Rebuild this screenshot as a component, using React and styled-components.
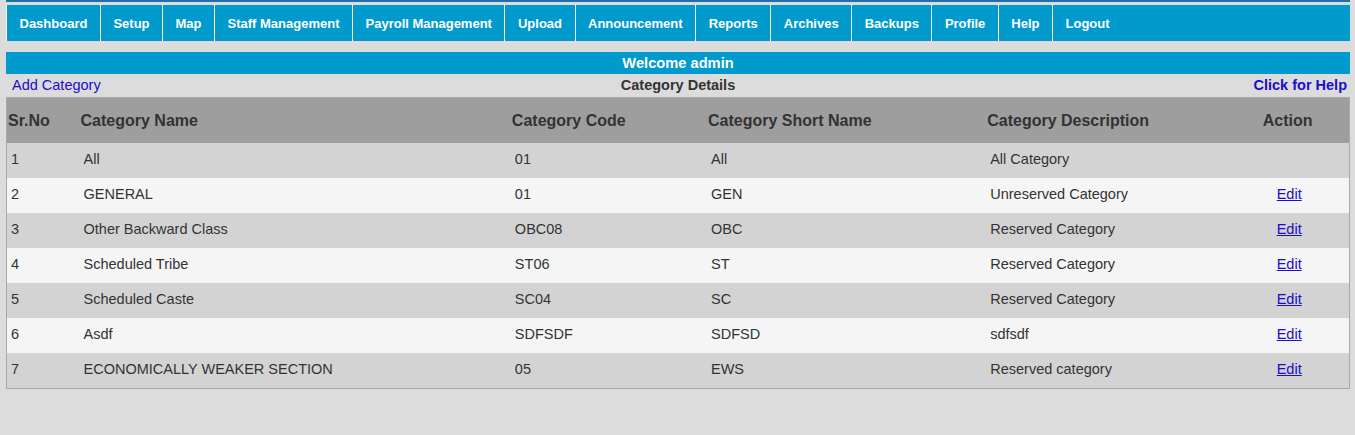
import React from "react";
import styled, { createGlobalStyle } from "styled-components";

const Global = createGlobalStyle`
  html, body { margin: 0; padding: 0; background: #dcdcdc; }
  body { font-family: "Liberation Sans", Arial, sans-serif; }
`;

const Page = styled.div`
  margin: 0 5px 0 6px;
`;

const TopStrip = styled.div`
  height: 2px;
  background: #1f6fa3;
  margin-bottom: 3px;
`;

const Nav = styled.nav`
  display: flex;
  height: 36px;
  background: #009acd;
`;

const NavItem = styled.a`
  display: flex;
  align-items: center;
  padding: 0 12.5px;
  border-left: 1px solid #ffffff;
  color: #ffffff;
  font-weight: bold;
  font-size: 13px;
  text-decoration: none;
  white-space: nowrap;
`;

const Welcome = styled.div`
  margin-top: 11px;
  height: 22px;
  background: #009acd;
  color: #ffffff;
  font-weight: bold;
  font-size: 14.67px;
  display: flex;
  align-items: center;
  justify-content: center;
`;

const SubBar = styled.div`
  height: 21px;
  padding-bottom: 2px;
  display: grid;
  grid-template-columns: 1fr auto 1fr;
  align-items: center;
  font-size: 14.5px;
`;

const LeftLink = styled.a`
  color: #1a0dcc;
  text-decoration: none;
  padding-left: 6px;
  justify-self: start;
`;

const Title = styled.span`
  font-weight: bold;
  color: #333333;
`;

const RightLink = styled.a`
  color: #1a0dcc;
  font-weight: bold;
  text-decoration: none;
  justify-self: end;
  padding-right: 3px;
`;

const Table = styled.table`
  width: 100%;
  border-collapse: collapse;
  table-layout: fixed;
  border: 1px solid #a9a9a9;
  font-size: 14.5px;
  color: #333333;
`;

const Th = styled.th`
  height: 45px;
  padding: 0 0 0 1px;
  background: #9e9e9e;
  font-size: 16px;
  font-weight: bold;
  color: #333333;
  text-align: ${(p) => (p.$center ? "center" : "left")};
  vertical-align: middle;
`;

const Tr = styled.tr`
  background: ${(p) => (p.$odd ? "#d3d3d3" : "#f5f5f5")};
`;

const Td = styled.td`
  height: 31px;
  padding: 0 0 4px 4px;
  text-align: ${(p) => (p.$center ? "center" : "left")};
  vertical-align: middle;
  white-space: nowrap;
`;

const EditLink = styled.a`
  color: #1a0dcc;
  text-decoration: underline;
`;

const navItems = [
  "Dashboard",
  "Setup",
  "Map",
  "Staff Management",
  "Payroll Management",
  "Upload",
  "Announcement",
  "Reports",
  "Archives",
  "Backups",
  "Profile",
  "Help",
  "Logout",
];

const rows = [
  ["1", "All", "01", "All", "All Category", false],
  ["2", "GENERAL", "01", "GEN", "Unreserved Category", true],
  ["3", "Other Backward Class", "OBC08", "OBC", "Reserved Category", true],
  ["4", "Scheduled Tribe", "ST06", "ST", "Reserved Category", true],
  ["5", "Scheduled Caste", "SC04", "SC", "Reserved Category", true],
  ["6", "Asdf", "SDFSDF", "SDFSD", "sdfsdf", true],
  ["7", "ECONOMICALLY WEAKER SECTION", "05", "EWS", "Reserved category", true],
];

export default function App() {
  return (
    <>
      <Global />
      <Page>
        <TopStrip />
        <Nav>
          {navItems.map((n) => (
            <NavItem key={n} href="#">
              {n}
            </NavItem>
          ))}
        </Nav>
        <Welcome>Welcome admin</Welcome>
        <SubBar>
          <LeftLink href="#">Add Category</LeftLink>
          <Title>Category Details</Title>
          <RightLink href="#">Click for Help</RightLink>
        </SubBar>
        <Table>
          <colgroup>
            <col style={{ width: 73 }} />
            <col style={{ width: 431 }} />
            <col style={{ width: 196 }} />
            <col style={{ width: 279 }} />
            <col style={{ width: 239 }} />
            <col style={{ width: 124 }} />
          </colgroup>
          <thead>
            <tr>
              <Th>Sr.No</Th>
              <Th>Category Name</Th>
              <Th>Category Code</Th>
              <Th>Category Short Name</Th>
              <Th>Category Description</Th>
              <Th $center>Action</Th>
            </tr>
          </thead>
          <tbody>
            {rows.map((r, i) => (
              <Tr key={r[0]} $odd={i % 2 === 0}>
                <Td>{r[0]}</Td>
                <Td>{r[1]}</Td>
                <Td>{r[2]}</Td>
                <Td>{r[3]}</Td>
                <Td>{r[4]}</Td>
                <Td $center>{r[5] ? <EditLink href="#">Edit</EditLink> : null}</Td>
              </Tr>
            ))}
          </tbody>
        </Table>
      </Page>
    </>
  );
}
